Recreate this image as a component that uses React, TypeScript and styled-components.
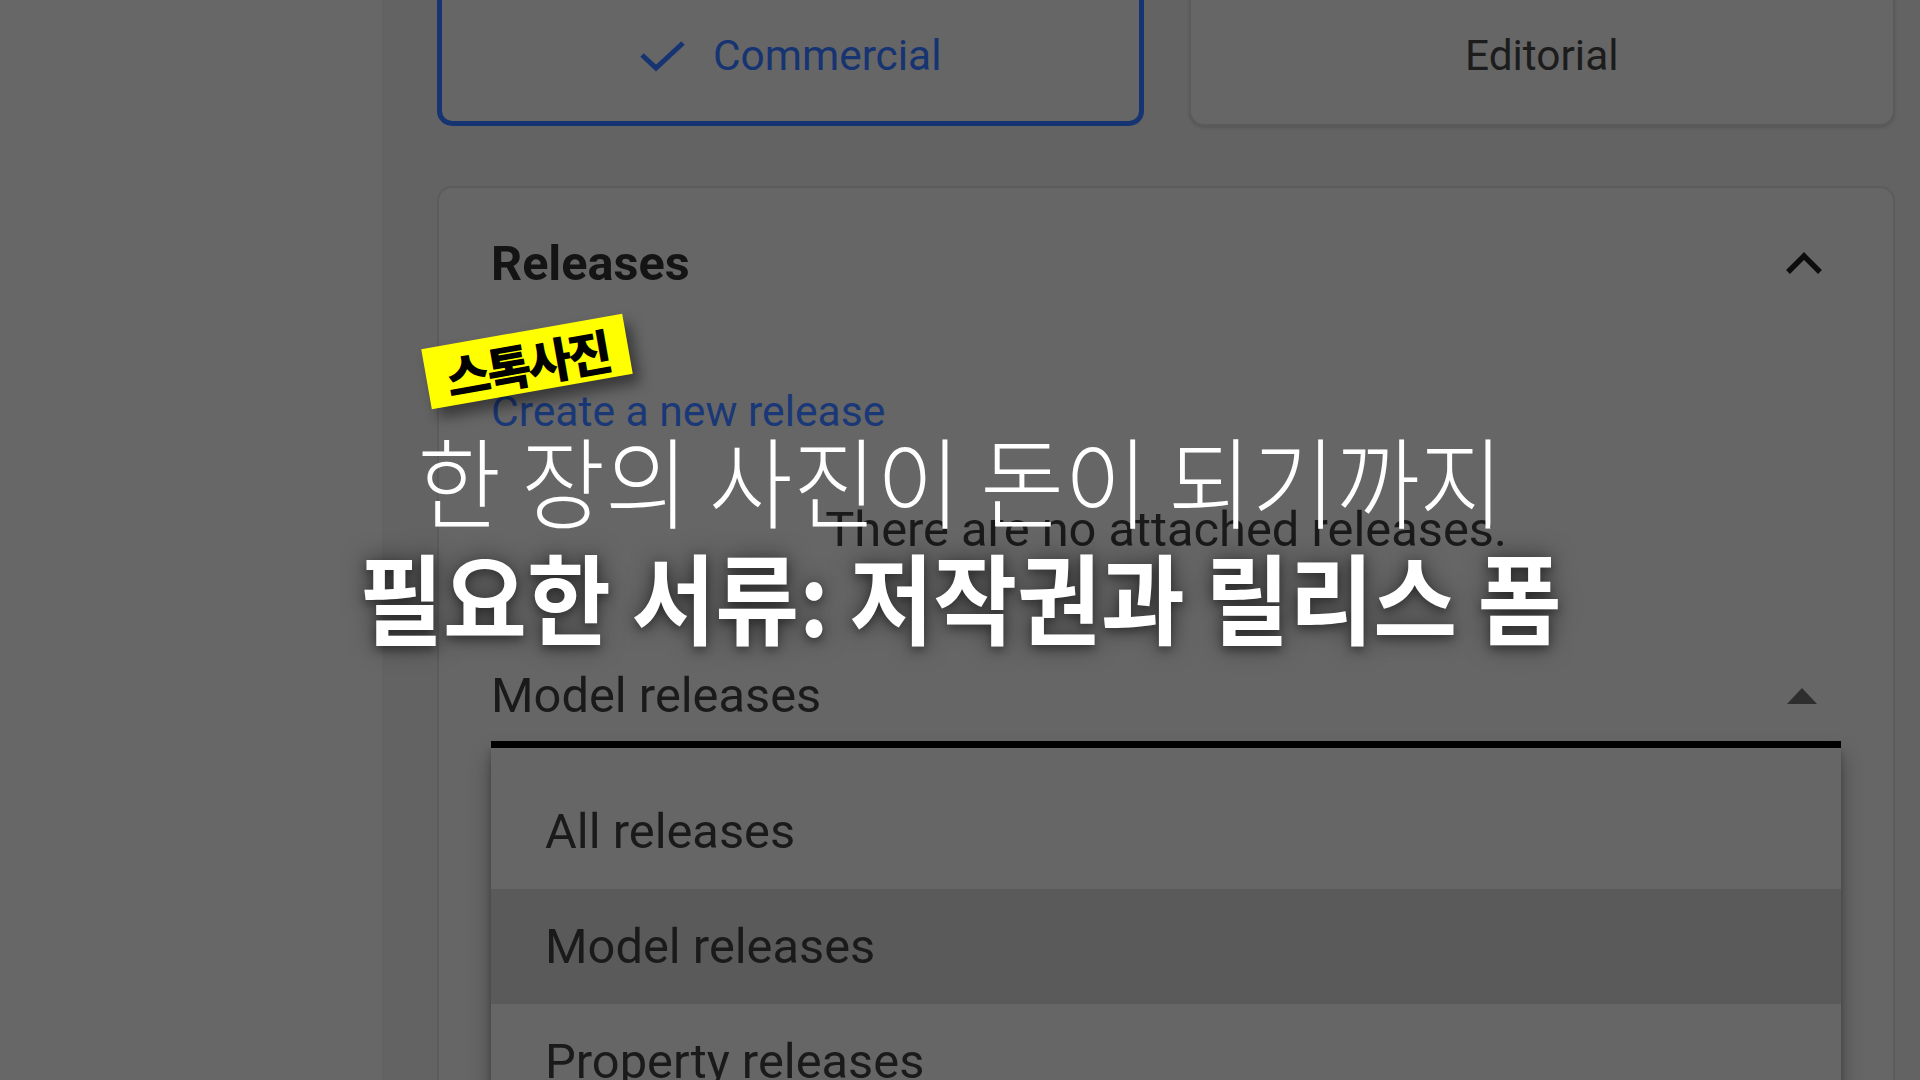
import * as React from 'react'
import styled, { createGlobalStyle } from 'styled-components'

const GlobalStyle = createGlobalStyle`
    html, body {
        margin: 0;
        padding: 0;
    }
    body {
        background: #636363;
        overflow: hidden;
        font-family: Roboto, "Noto Sans", sans-serif;
    }
`

const releaseOptions = ['All releases', 'Model releases', 'Property releases']

export default function App() {
    const selected = 'Model releases'

    return (
        <Page>
            <GlobalStyle />
            <Sidebar />
            <Main>
                <LicenseRow>
                    <LicenseCard $active>
                        <svg width="48" height="32" viewBox="0 0 48 32">
                            <polyline
                                points="3,15 17,28 44,3"
                                fill="none"
                                stroke="#163372"
                                strokeWidth="5"
                            />
                        </svg>
                        Commercial
                    </LicenseCard>
                    <LicenseCard>Editorial</LicenseCard>
                </LicenseRow>

                <Panel>
                    <PanelHeader>
                        <PanelTitle>Releases</PanelTitle>
                        <Chevron width="40" height="24" viewBox="0 0 40 24">
                            <polyline
                                points="4,20 20,4 36,20"
                                fill="none"
                                stroke="#0d0d0d"
                                strokeWidth="5.5"
                            />
                        </Chevron>
                    </PanelHeader>
                    <CreateLink href="#">Create a new release</CreateLink>
                    <EmptyText>There are no attached releases.</EmptyText>

                    <SelectField>
                        {selected}
                        <Caret width="30" height="16" viewBox="0 0 30 16">
                            <polygon points="0,16 15,0 30,16" fill="#2e2e2e" />
                        </Caret>
                    </SelectField>
                    <Menu>
                        {releaseOptions.map(option => (
                            <MenuItem key={option} $selected={option === selected}>
                                {option}
                            </MenuItem>
                        ))}
                    </Menu>
                </Panel>
            </Main>

            <Overlay>
                <Tag>스톡사진</Tag>
                <Headline>
                    <Subline>한 장의 사진이 돈이 되기까지</Subline>
                    <MainLine>필요한 서류: 저작권과 릴리스 폼</MainLine>
                </Headline>
            </Overlay>
        </Page>
    )
}

const Page = styled.div`
    position: relative;
    width: 1920px;
    height: 1080px;
    overflow: hidden;
    display: grid;
    grid-template-columns: 382px 1fr;
    background: #636363;
`
const Sidebar = styled.aside`
    background: #676767;
`
const Main = styled.main`
    display: flex;
    flex-direction: column;
    padding: 0 25px 0 55px;
`
const LicenseRow = styled.div`
    display: grid;
    grid-template-columns: 1fr 1fr;
    gap: 45px;
    margin-top: -15px;
`
const LicenseCard = styled.div<{ $active?: boolean }>`
    box-sizing: border-box;
    height: 141px;
    border-radius: 15px;
    background: #666666;
    border: ${props => (props.$active ? '5px solid #163372' : '2px solid #5b5b5b')};
    box-shadow: ${props => (props.$active ? 'none' : '0 2px 3px rgba(0, 0, 0, 0.12)')};
    display: flex;
    align-items: center;
    justify-content: center;
    gap: 26px;
    font: 400 42.4px Roboto, sans-serif;
    color: ${props => (props.$active ? '#163372' : '#1c1c1c')};
`
const Panel = styled.section`
    margin-top: 60px;
    min-height: 1100px;
    border: 2px solid #5c5c5c;
    border-radius: 15px;
    background: #666666;
    padding: 48px 52px 0;
`
const PanelHeader = styled.div`
    display: flex;
    align-items: center;
    justify-content: space-between;
    height: 56px;
`
const PanelTitle = styled.h2`
    margin: 0;
    font: 700 48.6px/56px Roboto, sans-serif;
    color: #141414;
`
const Chevron = styled.svg`
    margin-right: 17px;
`
const CreateLink = styled.a`
    display: block;
    width: fit-content;
    margin-top: 95px;
    font: 400 42.6px/49px Roboto, sans-serif;
    color: #1a3877;
    text-decoration: none;
`
const EmptyText = styled.p`
    margin: 66px 0 0;
    text-align: center;
    font: 400 48.8px/56px Roboto, sans-serif;
    color: #1a1a1a;
`
const SelectField = styled.div`
    margin-top: 110px;
    height: 56px;
    padding-bottom: 17px;
    border-bottom: 7px solid #000;
    display: flex;
    align-items: center;
    justify-content: space-between;
    font: 400 48.8px/56px Roboto, sans-serif;
    color: #1a1a1a;
`
const Caret = styled.svg`
    margin-right: 24px;
`
const Menu = styled.ul`
    margin: 0;
    padding: 26px 0 0;
    list-style: none;
    background: #666666;
    box-shadow: 0 8px 20px rgba(0, 0, 0, 0.35), 0 2px 6px rgba(0, 0, 0, 0.2);
`
const MenuItem = styled.li<{ $selected?: boolean }>`
    height: 115px;
    display: flex;
    align-items: center;
    padding-left: 54px;
    font: 400 48.8px Roboto, sans-serif;
    color: #1a1a1a;
    background: ${props => (props.$selected ? '#5a5a5a' : 'transparent')};
`
const Overlay = styled.div`
    position: absolute;
    inset: 0;
    pointer-events: none;
`
const Tag = styled.div`
    position: absolute;
    left: 425px;
    top: 331px;
    width: 204px;
    height: 61px;
    background: #ffff00;
    transform: rotate(-10deg);
    box-shadow: 6px 10px 14px rgba(0, 0, 0, 0.45);
    display: flex;
    align-items: center;
    justify-content: center;
    font: 900 48px/1 "Noto Sans CJK KR", sans-serif;
    letter-spacing: -3px;
    color: #000;
`
const Headline = styled.div`
    position: absolute;
    left: 0;
    right: 0;
    top: 429px;
    display: flex;
    flex-direction: column;
    align-items: center;
    font-family: "Noto Sans CJK KR", sans-serif;
    color: #fff;
    white-space: nowrap;
`
const Subline = styled.div`
    font-size: 99px;
    font-weight: 300;
    line-height: 1;
    transform: scaleX(0.92);
`
const MainLine = styled.div`
    margin-top: 17px;
    font-size: 98px;
    font-weight: 700;
    line-height: 1;
    transform: scaleX(0.93);
    text-shadow: 0 0 24px rgba(0, 0, 0, 0.55), 0 4px 10px rgba(0, 0, 0, 0.35);
`
